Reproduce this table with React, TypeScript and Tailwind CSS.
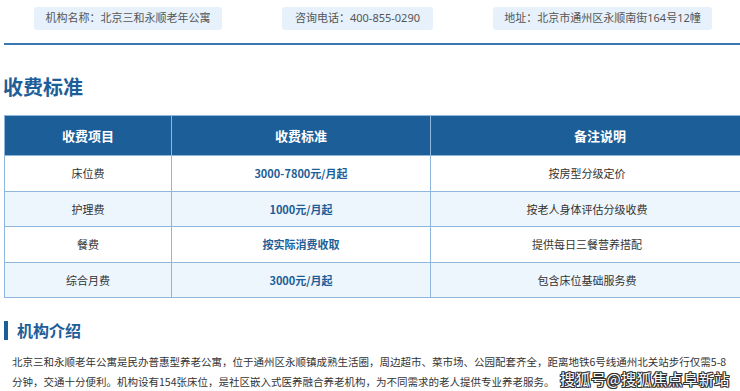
const INFO = [
  { text: "机构名称：北京三和永顺老年公寓", w: "w-[188px]" },
  { text: "咨询电话：400-855-0290", w: "w-[151px]" },
  { text: "地址：北京市通州区永顺南街164号12幢", w: "w-[219px]" },
];

const FEES = [
  { item: "床位费", price: "3000-7800元/月起", note: "按房型分级定价" },
  { item: "护理费", price: "1000元/月起", note: "按老人身体评估分级收费" },
  { item: "餐费", price: "按实际消费收取", note: "提供每日三餐营养搭配" },
  { item: "综合月费", price: "3000元/月起", note: "包含床位基础服务费" },
];

const ROW_HEIGHTS = ["h-[36px]", "h-[35px]", "h-[36px]", "h-[35px]"];

export default function App() {
  return (
    <div className="relative w-[740px] h-[391px] overflow-hidden bg-white font-['Noto_Sans_CJK_SC','Noto_Sans',sans-serif] text-[#333]">
      {/* info pills */}
      <div className="flex gap-[60px] pl-[34px] pt-[7px]">
        {INFO.map((p) => (
          <div
            key={p.text}
            className={`${p.w} h-[23px] flex items-center justify-center rounded-[3px] bg-[#e6f1fb] text-[11px] text-[#555] whitespace-nowrap font-['Noto_Sans','Noto_Sans_CJK_SC',sans-serif]`}
          >
            {p.text}
          </div>
        ))}
      </div>

      <div className="mt-[13px] ml-[4px] h-[2px] bg-[#3a77b3]" />

      <h2 className="mt-[28px] ml-[3px] text-[20px] leading-[28px] font-bold text-[#1d5e98]">收费标准</h2>

      <table className="mt-[14px] ml-[4px] w-[760px] border-collapse table-fixed">
        <colgroup>
          <col className="w-[167px]" />
          <col className="w-[259px]" />
          <col />
        </colgroup>
        <thead>
          <tr className="h-[40px] bg-[#1c5e98] text-white text-[13px] font-bold">
            <th className="border border-[#8fb6dc]">收费项目</th>
            <th className="border border-[#8fb6dc]">收费标准</th>
            <th className="border border-[#8fb6dc] text-left pl-[143px]">备注说明</th>
          </tr>
        </thead>
        <tbody>
          {FEES.map((f, i) => (
            <tr key={f.item} className={`${ROW_HEIGHTS[i]} text-[11px] ${i % 2 === 1 ? "bg-[#eef6fd]" : "bg-white"}`}>
              <td className="border border-[#8fb6dc] text-center">{f.item}</td>
              <td className="border border-[#8fb6dc] text-center font-bold text-[#1d5e98]">{f.price}</td>
              <td className="border border-[#8fb6dc] text-left">
                <div className="w-[312px] text-center">{f.note}</div>
              </td>
            </tr>
          ))}
        </tbody>
      </table>

      <div className="mt-[23px] ml-[4px] flex items-center gap-[9px] h-[19px]">
        <div className="w-[4px] h-[19px] bg-[#1c5e98]" />
        <h3 className="text-[16px] leading-[19px] font-bold text-[#1d5e98]">机构介绍</h3>
      </div>

      <p className="mt-[12px] pl-[12px] text-[10.5px] leading-[20px] text-[#333] whitespace-nowrap">
        北京三和永顺老年公寓是民办普惠型养老公寓，位于通州区永顺镇成熟生活圈，周边超市、菜市场、公园配套齐全，距离地铁6号线通州北关站步行仅需5-8
        <br />
        分钟，交通十分便利。机构设有154张床位，是社区嵌入式医养融合养老机构，为不同需求的老人提供专业养老服务。
      </p>

      {/* watermark */}
      <div className="absolute left-[560px] top-[371px] text-[15px] leading-[15px] text-white tracking-[0.5px] [text-shadow:1px_0_0_#333,-1px_0_0_#333,0_1px_0_#333,0_-1px_0_#333,1px_1px_0_#333,-1px_-1px_0_#333,1px_-1px_0_#333,-1px_1px_0_#333]">
        搜狐号@搜狐焦点阜新站
      </div>
    </div>
  );
}
